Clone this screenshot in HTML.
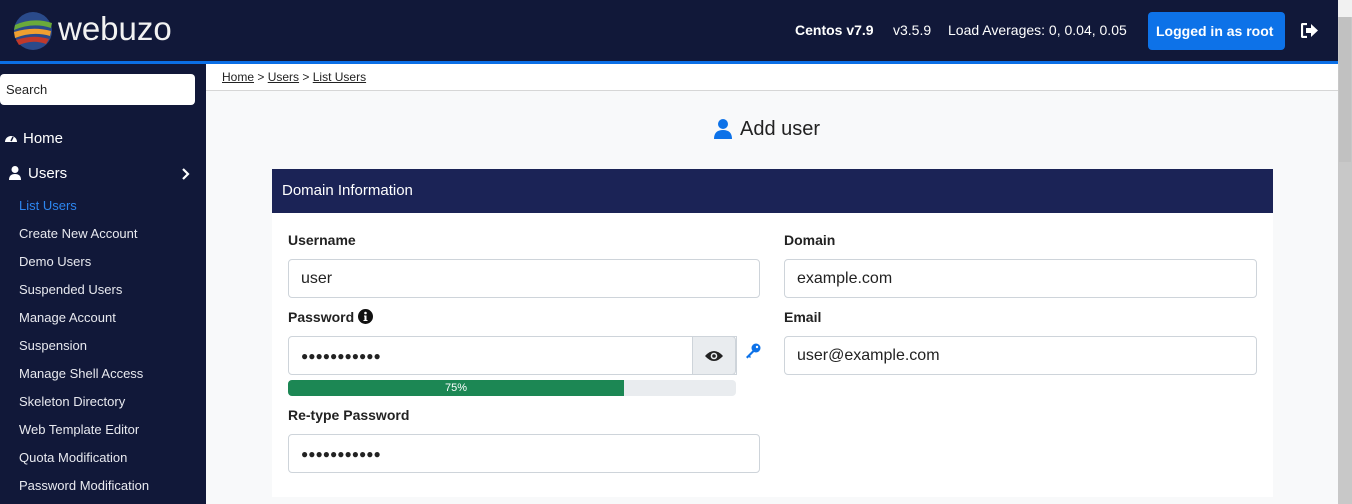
<!DOCTYPE html><html><head><style>
*{box-sizing:border-box;margin:0;padding:0}
body{width:1352px;height:504px;overflow:hidden;font-family:"Liberation Sans",sans-serif;background:#f8f9fa;position:relative}
.hdr{position:absolute;left:0;top:0;width:1338px;height:61px;background:#111839}
.bl{position:absolute;left:0;top:61px;width:1338px;height:3px;background:#0b6fe6}
.side{position:absolute;left:0;top:64px;width:206px;height:440px;background:#111839;color:#fff}
.sb{position:absolute;right:0;top:0;width:14px;height:504px;background:#c8c8c8}
.sb:before{content:"";position:absolute;left:0;top:0;width:14px;height:17px;background:#f1f1f1}
.sb:after{content:"";position:absolute;left:1px;top:17px;width:12px;height:145px;background:#c1c1c1}
.t{position:absolute;white-space:nowrap}
.sub{position:absolute;left:19px;font-size:13px;color:#e8e9ef}
.bc{position:absolute;left:206px;top:64px;width:1132px;height:27px;background:#fff;border-bottom:1px solid #d6d6d6}
.card{position:absolute;left:272px;top:169px;width:1001px;height:328px;background:#fff}
.ch{height:44px;background:#1b2356;color:#fff;font-size:15px;padding:13px 10px}
.lab{position:absolute;font-size:14px;font-weight:bold;color:#222}
.in{position:absolute;height:39px;border:1px solid #ced4da;border-radius:4px;background:#fff;font-size:16px;color:#222;padding:10px 12px}
.dots{letter-spacing:0px;font-size:12px;padding-top:12px;color:#222}
</style></head><body>
<div class="hdr">
<svg style="position:absolute;left:12px;top:11px" width="42" height="40" viewBox="0 0 42 40"><circle cx="21" cy="20" r="19" fill="#2a4a8a"/><path d="M3 14 Q21 6 40 12 L39 17 Q21 11 2 19Z" fill="#6aaa3a"/><path d="M2 21 Q21 15 39 20 L38 25 Q21 20 3 27Z" fill="#f0a030"/><path d="M4 29 Q21 23 37 28 L34 33 Q21 28 7 34Z" fill="#c0392b"/></svg>
<div class="t" style="left:58px;top:10px;font-size:33px;color:#f2f2f2">webuzo</div>
<div class="t" style="left:795px;top:22px;font-size:14px;color:#fff;font-weight:bold">Centos v7.9</div>
<div class="t" style="left:893px;top:22px;font-size:14px;color:#fff">v3.5.9</div>
<div class="t" style="left:948px;top:22px;font-size:14px;color:#fff">Load Averages: 0, 0.04, 0.05</div>
<div class="t" style="left:1148px;top:12px;width:137px;height:38px;background:#0d72e8;border-radius:4px;color:#fff;font-size:14px;font-weight:bold;padding:11px 0 0 8px">Logged in as root</div>
<svg style="position:absolute;left:1301px;top:23px" width="17" height="15" viewBox="0 0 17 15"><path d="M6 1H2Q1 1 1 2V13Q1 14 2 14H6" stroke="#fff" stroke-width="2.2" fill="none"/><path d="M5 5H10V1L17 7.5 10 14V10H5Z" fill="#fff"/></svg>
</div>
<div class="bl"></div>
<div class="side">
<div style="position:absolute;left:0;top:10px;width:195px;height:31px;background:#fff;border-radius:4px;color:#222;font-size:13px;padding:8px 6px">Search</div>
<svg style="position:absolute;left:5px;top:69px" width="12" height="10" viewBox="0 0 12 10"><path d="M0 9A6 6 0 0 1 12 9Z" fill="#fff"/><path d="M6 8L8 4" stroke="#111839" stroke-width="1.5"/></svg>
<div class="t" style="left:23px;top:66px;font-size:15px">Home</div>
<svg style="position:absolute;left:9px;top:102px" width="12" height="14" viewBox="0 0 12 14"><circle cx="6" cy="3.5" r="3.5" fill="#fff"/><path d="M0 14Q0 8 6 8Q12 8 12 14Z" fill="#fff"/></svg>
<div class="t" style="left:28px;top:101px;font-size:15px">Users</div>
<svg style="position:absolute;left:181px;top:104px" width="9" height="12" viewBox="0 0 9 12"><path d="M2 1L7 6 2 11" stroke="#fff" stroke-width="2.2" fill="none"/></svg>
<div class="sub" style="top:134px;color:#2d86f0">List Users</div>
<div class="sub" style="top:162px">Create New Account</div>
<div class="sub" style="top:190px">Demo Users</div>
<div class="sub" style="top:218px">Suspended Users</div>
<div class="sub" style="top:246px">Manage Account</div>
<div class="sub" style="top:274px">Suspension</div>
<div class="sub" style="top:302px">Manage Shell Access</div>
<div class="sub" style="top:330px">Skeleton Directory</div>
<div class="sub" style="top:358px">Web Template Editor</div>
<div class="sub" style="top:386px">Quota Modification</div>
<div class="sub" style="top:414px">Password Modification</div>
</div>
<div class="bc"><div class="t" style="left:16px;top:6px;font-size:12px;color:#222"><u>Home</u> &gt; <u>Users</u> &gt; <u>List Users</u></div></div>
<svg style="position:absolute;left:714px;top:119px" width="18" height="20" viewBox="0 0 18 20"><circle cx="9" cy="5" r="5" fill="#0d72e8"/><path d="M0 20 Q0 11 9 11 Q18 11 18 20Z" fill="#0d72e8"/></svg>
<div class="t" style="left:740px;top:118px;font-size:20px;color:#222">Add user</div>
<div class="card"><div class="ch">Domain Information</div>
<div class="lab" style="left:16px;top:63px">Username</div>
<div class="in" style="left:16px;top:90px;width:472px">user</div>
<div class="lab" style="left:16px;top:140px">Password <svg style="vertical-align:-2px" width="15" height="15" viewBox="0 0 15 15"><circle cx="7.5" cy="7.5" r="7.5" fill="#111"/><circle cx="7.5" cy="4" r="1.3" fill="#fff"/><path d="M6 6.5H8.5V11H9.5V12H5.5V11H6.5V7.5H6Z" fill="#fff"/></svg></div>
<div class="in dots" style="left:16px;top:167px;width:449px;border-radius:4px 0 0 4px">●●●●●●●●●●●</div>
<div class="in" style="left:420px;top:167px;width:44px;background:#e9ecef;border-radius:0 4px 4px 0"><svg style="position:absolute;left:12px;top:13px" width="18" height="12" viewBox="0 0 18 12"><path d="M0 6Q9 -4 18 6Q9 16 0 6Z" fill="#222"/><circle cx="9" cy="6" r="3.3" fill="#e9ecef"/><circle cx="9" cy="6" r="1.8" fill="#222"/></svg></div>
<svg style="position:absolute;left:473px;top:174px" width="16" height="16" viewBox="0 0 16 16"><circle cx="11" cy="5" r="4.5" fill="#0d72e8"/><path d="M8 7L1 14 2.5 15.5 4 14 5 15 6 14 5 13 9.5 8.5Z" fill="#0d72e8"/><circle cx="12" cy="4" r="1.2" fill="#fff"/></svg>
<div style="position:absolute;left:16px;top:211px;width:448px;height:16px;background:#e9ecef;border-radius:4px;overflow:hidden"><div style="width:336px;height:16px;background:#1c8754;color:#fff;font-size:11px;text-align:center;line-height:16px">75%</div></div>
<div class="lab" style="left:16px;top:238px">Re-type Password</div>
<div class="in dots" style="left:16px;top:265px;width:472px">●●●●●●●●●●●</div>
<div class="lab" style="left:512px;top:63px">Domain</div>
<div class="in" style="left:512px;top:90px;width:473px">example.com</div>
<div class="lab" style="left:512px;top:140px">Email</div>
<div class="in" style="left:512px;top:167px;width:473px">user@example.com</div>
</div>
<div class="sb"></div>
</body></html>
